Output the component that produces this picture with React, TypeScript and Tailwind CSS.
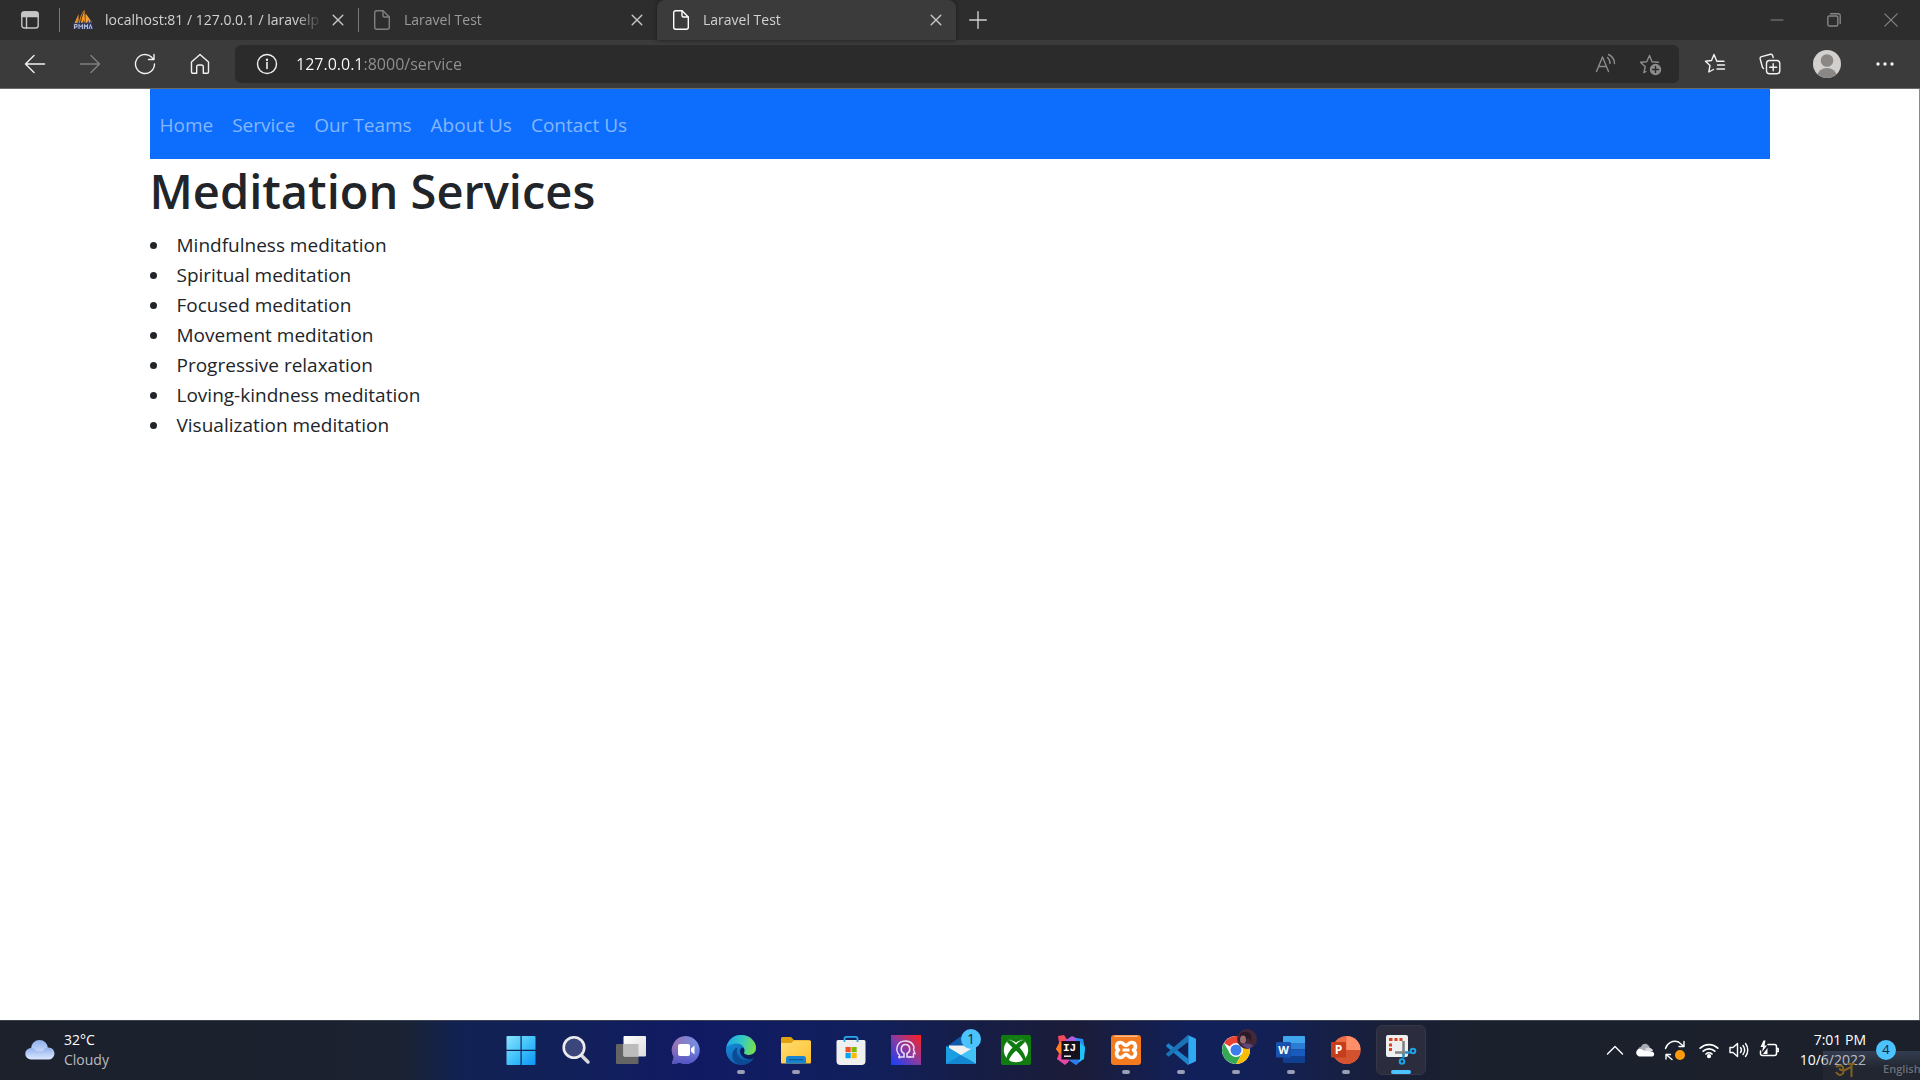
import React from "react";
import type { ReactNode } from "react";

/* ---------- browser icons ---------- */

function Line({ children, size = 20, className = "" }: { children: ReactNode; size?: number; className?: string }) {
  return (
    <svg
      width={size}
      height={size}
      viewBox={`0 0 ${size} ${size}`}
      fill="none"
      stroke="currentColor"
      strokeWidth="1.4"
      strokeLinecap="round"
      strokeLinejoin="round"
      className={"shrink-0 " + className}
      aria-hidden="true"
    >
      {children}
    </svg>
  );
}

function PageIcon() {
  return (
    <Line size={20}>
      <path d="M4.7 .7H11L17.3 7V17.3A2 2 0 0 1 15.300 19.300H4.700A2 2 0 0 1 2.700 17.300V2.700A2 2 0 0 1 4.700 .7Z" />
      <path d="M11 .9V5.500A1.500 1.500 0 0 0 12.500 7H17.100" />
    </Line>
  );
}

function CloseIcon() {
  return (
    <Line size={12}>
      <path d="M1.200 1.200 10.800 10.800M10.800 1.200 1.200 10.800" />
    </Line>
  );
}

function PmaIcon() {
  return (
    <svg width="20" height="20" viewBox="0 0 20 20" className="shrink-0" aria-hidden="true">
      <path d="M1.500 13 5.500 4 5.700 13Z" fill="#e8912b" />
      <path d="M6 13C6.500 8 8.500 3 11.500 0L12 13Z" fill="#f79a1f" />
      <path d="M12.500 13V3.500C15 6 16.500 9 19 12.500Z" fill="#f0a33a" />
      <path d="M7.500 13C8 9 9 5 10.500 2.500" stroke="#2d2d2d" fill="none" />
      <path d="M1.500 19V14.500H4V17H1.500M6 19V14.500L7.700 17 9.500 14.500V19M11.500 19V14.500L13 17 14.500 14.500V19M16 19 17.500 14.500 19 19" stroke="#34406f" strokeWidth="2.600" fill="none" />
      <path d="M1.500 19V14.500H4V17H1.500M6 19V14.500L7.700 17 9.500 14.500V19M11.500 19V14.500L13 17 14.500 14.500V19M16 19 17.500 14.500 19 19" stroke="#c3c8dc" strokeWidth=".9" fill="none" />
    </svg>
  );
}

/* ---------- browser ---------- */

type TabProps = { icon: ReactNode; title: string; active?: boolean; dim?: boolean; divider?: boolean };

function BrowserTab({ icon, title, active, dim, divider }: TabProps) {
  return (
    <div
      className={
        "flex h-10 w-[299px] items-center pl-3.5 pr-3.5 " +
        (active
          ? "rounded-t-lg bg-[#3b3b3b] text-[#d2d2d2] shadow-[0_0_4px_#1c1c1c]"
          : dim
            ? "text-[#9b9b9b]"
            : "text-[#d2d2d2]") +
        (divider ? " relative before:absolute before:left-0 before:h-6 before:w-px before:bg-[#7a7a7a]" : "")
      }
    >
      <span className={active ? "text-white" : "text-[#808080]"}>{icon}</span>
      <button
        type="button"
        role="tab"
        aria-selected={!!active}
        className="ml-3 min-w-0 flex-1 whitespace-nowrap text-left text-sm leading-6 [mask-image:linear-gradient(90deg,#000_88%,transparent)]"
      >
        {title}
      </button>
      <button type="button" aria-label={"Close " + title} className="ml-2.5 text-[#c8c8c8]">
        <CloseIcon />
      </button>
    </div>
  );
}

function BarButton({ label, dim, wide, children }: { label: string; dim?: boolean; wide?: boolean; children: ReactNode }) {
  return (
    <button
      type="button"
      aria-label={label}
      className={
        "flex h-10 shrink-0 items-center justify-center " +
        (wide ? "w-[60px] " : "w-[55px] ") +
        (dim ? "text-[#808080]" : "text-[#f2f2f2]")
      }
    >
      {children}
    </button>
  );
}

function TabStrip() {
  return (
    <div className="flex h-10 items-center bg-[#2d2d2d]">
      <button type="button" aria-label="Tab actions" className="flex w-[59px] justify-center text-[#c6c6c6]">
        <Line size={20}>
          <rect x="1.800" y="2" width="16.400" height="16" rx="2.500" />
          <path d="M2 5.500V4.500A2.500 2.500 0 0 1 4.500 2H15.500A2.500 2.500 0 0 1 18 4.500V6.500H2Z" fill="currentColor" />
          <path d="M6.500 7V18" />
        </Line>
      </button>
      <div role="tablist" className="flex">
        <BrowserTab icon={<PmaIcon />} title="localhost:81 / 127.0.0.1 / laravelp" divider />
        <BrowserTab icon={<PageIcon />} title="Laravel Test" dim divider />
        <BrowserTab icon={<PageIcon />} title="Laravel Test" active />
      </div>
      <button type="button" aria-label="New tab" className="flex w-11 justify-center text-[#d0d0d0]">
        <Line size={18}>
          <path d="M9 .7V17.300M.7 9H17.300" />
        </Line>
      </button>
      <div className="ml-auto flex pr-px text-[#858585]">
        <button type="button" aria-label="Minimize" className="flex h-10 w-[57px] items-center justify-center">
          <Line size={14}><path d="M1 7H13" strokeWidth="1.200" /></Line>
        </button>
        <button type="button" aria-label="Restore" className="flex h-10 w-[57px] items-center justify-center">
          <Line size={14}>
            <rect x=".8" y="3" width="10" height="10" rx="1.500" />
            <path d="M3.500 .8H11.500A1.800 1.800 0 0 1 13.200 2.600V10.500" />
          </Line>
        </button>
        <button type="button" aria-label="Close window" className="flex h-10 w-[57px] items-center justify-center">
          <Line size={14}><path d="M.8 .8 13.200 13.200M13.200 .8 .8 13.200" strokeWidth="1.200" /></Line>
        </button>
      </div>
    </div>
  );
}

function Toolbar() {
  return (
    <div className="flex h-[49px] items-center border-b border-[#6b6b6b] bg-[#3b3b3b] pr-2 pl-[7px]">
      <BarButton label="Back"><Line size={22}><path d="M20.500 11H1.500M10 2.500 1.500 11 10 19.500" /></Line></BarButton>
      <BarButton label="Forward" dim><Line size={22}><path d="M1.500 11H20.500M12 2.500 20.500 11 12 19.500" /></Line></BarButton>
      <BarButton label="Refresh">
        <Line size={22}><path d="M20.500 11A9.500 9.500 0 1 1 17.500 4.100L19.500 6.300M20 1.500V6.500H14.500" /></Line>
      </BarButton>
      <BarButton label="Home">
        <Line size={22}><path d="M2.500 9 11 1.500 19.500 9V19A1.300 1.300 0 0 1 18.200 20.300H14.300V14A2 2 0 0 0 12.300 12H9.700A2 2 0 0 0 7.700 14V20.300H3.800A1.300 1.300 0 0 1 2.500 19Z" /></Line>
      </BarButton>
      <div className="ml-2 flex h-[38px] min-w-0 flex-1 items-center rounded-md bg-[#2b2b2b] pl-[21px] pr-1.5">
        <button type="button" aria-label="Site information" className="text-[#f0f0f0]">
          <Line size={22}>
            <circle cx="11" cy="11" r="9.500" />
            <path d="M11 9.500V15.500" strokeWidth="1.600" />
            <circle cx="11" cy="6.800" r=".5" fill="currentColor" />
          </Line>
        </button>
        <input
          aria-label="Address"
          defaultValue="127.0.0.1:8000/service"
          className="ml-4.5 min-w-0 flex-1 bg-[linear-gradient(90deg,#ffffff_68px,#929292_68px)] bg-clip-text text-base text-transparent outline-none"
        />
        <button type="button" aria-label="Read aloud" className="flex w-[45px] justify-center text-[#8c8c8c]">
          <Line size={22}>
            <path d="M1.500 18.500 7.500 4 13.500 18.500M3.500 13.500H11.500M12.500 4.500C14.500 6 15 8 15 10.500M13.500 1.500C17.500 3.500 19.500 6.500 19.500 10.500" />
          </Line>
        </button>
        <button type="button" aria-label="Add to favorites" className="flex w-[45px] justify-center text-[#8c8c8c]">
          <Line size={23}>
            <path d="M7 18.500 4.800 19.700 6.300 13.700 1.500 9.200 7.700 8.700 10.500 2.500 13 8.700 19.500 9.200" />
            <circle cx="16.500" cy="16.500" r="5" fill="currentColor" />
            <path d="M16.500 13.500V19.500M13.500 16.500H19.500" stroke="#2b2b2b" />
          </Line>
        </button>
      </div>
      <div className="ml-2 flex">
        <BarButton label="Favorites">
          <Line size={22}>
            <path d="M20 8.200H12.800L10 1.500 7.500 7.500 1.500 8.200 6 12.500 4.800 19 9.500 16.500" />
            <path d="M13.500 12H20.500M13 16H20.500" />
          </Line>
        </BarButton>
        <BarButton label="Collections">
          <Line size={22}>
            <rect x="7.500" y="7.500" width="13.300" height="13.300" rx="3" />
            <path d="M14.200 10.700V17.700M10.700 14.200H17.700" />
            <path d="M4.500 15.500 3.500 14.500 1.200 6A2 2 0 0 1 2.600 3.600L11.500 1.300A2 2 0 0 1 13.700 2.700L14.200 4.500" />
          </Line>
        </BarButton>
        <BarButton label="Profile" wide>
          <svg width="28" height="28" viewBox="0 0 28 28" aria-hidden="true">
            <defs><clipPath id="avatar"><circle cx="14" cy="14" r="14" /></clipPath></defs>
            <g clipPath="url(#avatar)">
              <rect width="28" height="28" fill="#d2d0ce" />
              <circle cx="14" cy="10.500" r="6.300" fill="#8a8784" />
              <ellipse cx="14" cy="26" rx="9.500" ry="8" fill="#8a8784" />
            </g>
          </svg>
        </BarButton>
        <BarButton label="Settings and more">
          <svg width="18" height="4" viewBox="0 0 18 4" fill="currentColor" aria-hidden="true">
            <circle cx="2" cy="2" r="1.700" /><circle cx="9" cy="2" r="1.700" /><circle cx="16" cy="2" r="1.700" />
          </svg>
        </BarButton>
      </div>
    </div>
  );
}

/* ---------- page ---------- */

const links = ["Home", "Service", "Our Teams", "About Us", "Contact Us"];
const services = [
  "Mindfulness meditation",
  "Spiritual meditation",
  "Focused meditation",
  "Movement meditation",
  "Progressive relaxation",
  "Loving-kindness meditation",
  "Visualization meditation",
];

function Page() {
  return (
    <main className="min-h-0 flex-1 border-r border-[#8a8a8a] bg-white text-[#212529]">
      <div className="mx-auto w-full max-w-[1620px]">
        <nav aria-label="Main" className="flex items-center gap-[19px] bg-[#0d6efd] pt-[21px] pb-[19px] pl-2.5">
          {links.map((l) => (
            <a key={l} href="#" className="text-[19px] leading-[30px] text-[#86b6fe]">
              {l}
            </a>
          ))}
        </nav>
        <h1 className="mb-2 pt-px text-[47px] leading-[62px] font-semibold">Meditation Services</h1>
        <ul className="list-inside list-disc text-[19px] leading-[30px]">
          {services.map((s) => (
            <li key={s}>{s}</li>
          ))}
        </ul>
      </div>
    </main>
  );
}

/* ---------- taskbar ---------- */

function App30({ children }: { children: ReactNode }) {
  return (
    <svg width="30" height="30" viewBox="0 0 30 30" className="overflow-visible" aria-hidden="true">
      {children}
    </svg>
  );
}

type TaskItem = { name: string; running?: boolean; active?: boolean; icon: ReactNode };

const tasks: TaskItem[] = [
  {
    name: "Start",
    icon: (
      <App30>
        <defs><linearGradient id="win" x1="0" y1="0" x2="30" y2="30" gradientUnits="userSpaceOnUse"><stop stopColor="#8fe6ff" /><stop offset=".5" stopColor="#42c3fb" /><stop offset="1" stopColor="#0a93f5" /></linearGradient></defs>
        <path d="M.5 2A1 1 0 0 1 1.500 1H14.500V14.800H.5ZM15.700 1H28.500A1 1 0 0 1 29.500 2V14.800H15.700ZM.5 16H14.500V30H1.500A1 1 0 0 1 .5 29ZM15.700 16H29.500V29A1 1 0 0 1 28.500 30H15.700Z" fill="url(#win)" />
      </App30>
    ),
  },
  {
    name: "Search",
    icon: (
      <App30>
        <path d="M20.500 20.500 27 27" stroke="#d9d9de" strokeWidth="3.500" strokeLinecap="round" />
        <circle cx="13" cy="12.500" r="10.300" fill="#3b467a" stroke="#ececef" strokeWidth="2.600" />
      </App30>
    ),
  },
  {
    name: "Task view",
    icon: (
      <App30>
        <defs><linearGradient id="tv" x1="0" y1="0" x2="1" y2="1"><stop stopColor="#fff" /><stop offset="1" stopColor="#dcdcdc" /></linearGradient></defs>
        <rect x="0" y="9" width="22.500" height="20" rx="1" fill="#646464" />
        <rect x="7.500" y="1" width="22.500" height="20.500" rx="1" fill="url(#tv)" />
        <path d="M7.500 9H22.500V21.500H8.500A1 1 0 0 1 7.500 20.500Z" fill="#bcbcbc" />
      </App30>
    ),
  },
  {
    name: "Chat",
    icon: (
      <App30>
        <defs><linearGradient id="chat" x1="0" y1="0" x2="1" y2="0"><stop stopColor="#9a6fae" /><stop offset="1" stopColor="#6e92ea" /></linearGradient><linearGradient id="chat2" x1="0" y1="0" x2="0" y2="1"><stop offset=".3" stopColor="#5b5fd0" stopOpacity="0" /><stop offset="1" stopColor="#5154c4" /></linearGradient></defs>
        <path d="M15 1A14 14 0 1 1 9 27.800L2.500 29A1.200 1.200 0 0 1 1.200 27.500L2.700 22A14 14 0 0 1 15 1Z" fill="url(#chat)" />
        <path d="M15 1A14 14 0 1 1 9 27.800L2.500 29A1.200 1.200 0 0 1 1.200 27.500L2.700 22A14 14 0 0 1 15 1Z" fill="url(#chat2)" />
        <rect x="7" y="9" width="12" height="12" rx="2" fill="#fff" />
        <path d="M20 13.500 23.500 10.500V19.500L20 16.500Z" fill="#fff" />
      </App30>
    ),
  },
  {
    name: "Microsoft Edge",
    running: true,
    icon: (
      <App30>
        <defs>
          <linearGradient id="eg1" x1="0" y1=".3" x2="1" y2=".5"><stop stopColor="#1ea7e8" /><stop offset=".5" stopColor="#33c9c4" /><stop offset="1" stopColor="#7be04b" /></linearGradient>
          <linearGradient id="eg2" x1="0" y1="0" x2=".6" y2="1"><stop stopColor="#1a9de6" /><stop offset="1" stopColor="#0b56a8" /></linearGradient>
        </defs>
        <circle cx="15" cy="15" r="15" fill="url(#eg2)" />
        <path d="M.5 12C2 4.500 8 0 15 0 24 0 30 6.500 30 12.500 30 17 27 20 23 20 19.500 20 17.500 18.700 18 17.500 19.500 14.500 17.500 8.500 10.500 8.500 5.500 8.500 1.500 11 .5 12Z" fill="url(#eg1)" />
        <path d="M11.500 12.500C9 18 13 25.500 21 25.500 24.500 25.500 27 24 28.500 22.500 26 27 21 30 15.500 30 9 29 6 24 6.500 19 6.800 15.500 9 13.300 11.500 12.500Z" fill="#0c4a94" />
        <path d="M18.200 17C17.500 18.700 19.500 20 23 20 26 20 28.500 18.500 29.700 16L31 20.500 28 23C22 26.500 14.500 22 14 16.500 14 14 15.500 12.500 17 12.500 18.500 13.500 18.700 15.500 18.200 17Z" fill="#101d5c" />
      </App30>
    ),
  },
  {
    name: "File Explorer",
    running: true,
    icon: (
      <App30>
        <defs><linearGradient id="fo" x1="0" y1="0" x2="1" y2="1"><stop stopColor="#ffdd72" /><stop offset="1" stopColor="#fdc02f" /></linearGradient></defs>
        <path d="M0 3.500A1.500 1.500 0 0 1 1.500 2H10L13 5H28.500V12H0Z" fill="#e2a210" />
        <path d="M0 8H10.500L13 5.500H29A1 1 0 0 1 30 6.500V27.500A1 1 0 0 1 29 28.500H1A1 1 0 0 1 0 27.500Z" fill="url(#fo)" />
        <path d="M5 28.500V23.500A2.500 2.500 0 0 1 7.500 21H22.500A2.500 2.500 0 0 1 25 23.500V28.500Z" fill="#1783d1" />
        <path d="M8.500 24.700H21.500" stroke="#0d5a9c" strokeWidth="1.200" strokeLinecap="round" />
      </App30>
    ),
  },
  {
    name: "Microsoft Store",
    icon: (
      <App30>
        <path d="M.5 6.500A1.500 1.500 0 0 1 2 5H28A1.500 1.500 0 0 1 29.500 6.500V26A4 4 0 0 1 25.500 30H4.500A4 4 0 0 1 .5 26Z" fill="#f0f0f0" />
        <path d="M8.500 7V3.500A1.700 1.700 0 0 1 10.200 1.800H19.800A1.700 1.700 0 0 1 21.500 3.500V7" fill="none" stroke="#2aa9ea" strokeWidth="1.800" />
        <rect x="9.500" y="12" width="5.200" height="5.200" fill="#f25022" /><rect x="15.500" y="12" width="5.200" height="5.200" fill="#7fba00" />
        <rect x="9.500" y="18" width="5.200" height="5.200" fill="#00a4ef" /><rect x="15.500" y="18" width="5.200" height="5.200" fill="#ffb900" />
      </App30>
    ),
  },
  {
    name: "Assistant",
    icon: (
      <App30>
        <defs><linearGradient id="as" x1="0" y1="1" x2="1" y2="0"><stop stopColor="#1040ff" /><stop offset=".5" stopColor="#8a3aa0" /><stop offset="1" stopColor="#ff1f1f" /></linearGradient></defs>
        <rect width="30" height="30" fill="url(#as)" />
        <path d="M8.500 23.500V20C4 16 5 6 14.500 6 21 6 24 11 22.500 14.500L24 18.500H22.500V22H17.500" fill="none" stroke="#e9dcf4" strokeWidth="1.400" />
        <path d="M7 22H13V18.500C8.500 16 10 9.500 14.500 9.500 19 9.500 20.500 16 16 18.500V22H20" fill="none" stroke="#e9dcf4" strokeWidth="1.600" />
      </App30>
    ),
  },
  {
    name: "Mail, 1 new",
    icon: (
      <App30>
        <path d="M0 12 14.500 1.500 30 12V16H0Z" fill="#0c5aa8" />
        <path d="M3 10.500H27V18L15 26 3 18Z" fill="#f1f1f1" />
        <path d="M0 11 19 22.500 30 29H0Z" fill="#1b9de2" />
        <path d="M30 11 15 20 30 29Z" fill="#41c3f7" />
        <path d="M0 29 15 20 30 29Z" fill="#1487d2" />
        <circle cx="25" cy="4" r="10" fill="#4cc2ff" />
        <text x="25" y="9" textAnchor="middle" fontSize="14" fill="#10283c">1</text>
      </App30>
    ),
  },
  {
    name: "Xbox",
    icon: (
      <App30>
        <rect width="30" height="30" rx="2" fill="#107c10" />
        <circle cx="15" cy="15" r="12.200" fill="#fff" />
        <path d="M7.500 5.500C10 4.500 13 6 15 7.700 17 6 20 4.500 22.500 5.500L20 3.500 15 2.200 10 3.500Z" fill="#107c10" />
        <path d="M7 5C10.500 5 13.500 8 15 9.700 16.500 8 19.500 5 23 5L24 7 18.500 12.500C22 16.500 25 21 24.500 25L22.500 26C21 22 18 18 15 15.700 12 18 9 22 7.500 26L5.500 25C5 21 8 16.500 11.500 12.500L6 7Z" fill="#107c10" />
      </App30>
    ),
  },
  {
    name: "IntelliJ IDEA",
    icon: (
      <App30>
        <path d="M2 1 8 0 12 6V28L7 27 1 24 3 18 0 14 3 8Z" fill="#f24a5c" />
        <path d="M0 14 4 7 10 9 8 20 3 18Z" fill="#fc801d" />
        <path d="M10 5 16 1 22 4V9H9Z" fill="#b15de0" />
        <path d="M20 3 27 4 29 14 27 24 20 30 14 26Z" fill="#2a8df3" />
        <path d="M24 8 29 12 28 24 23 27Z" fill="#1fc3f5" />
        <path d="M1 24 5 20 14 25 9 30Z" fill="#e947a8" />
        <path d="M12 24H24L20 30Z" fill="#2c7cf0" />
        <rect x="5.500" y="6" width="18.500" height="18.500" fill="#160f1c" />
        <text x="7" y="16" fontSize="11" fontWeight="700" fill="#fff" fontFamily="Liberation Mono, monospace">IJ</text>
        <rect x="8" y="20.500" width="7" height="1.400" fill="#fff" />
      </App30>
    ),
  },
  {
    name: "XAMPP",
    running: true,
    icon: (
      <App30>
        <rect width="30" height="30" rx="3" fill="#f47a20" />
        <path d="M4 1.300H26" stroke="#fbb98a" strokeWidth="1.600" strokeLinecap="round" />
        <path d="M7.500 15C4.500 13 5 7.500 9.500 7.500 12.500 7.500 13 10.500 15 10.500 17 10.500 17.500 7.500 20.500 7.500 25 7.500 25.500 13 22.500 15 25.500 17 25 22.500 20.500 22.500 17.500 22.500 17 19.500 15 19.500 13 19.500 12.500 22.500 9.500 22.500 5 22.500 4.500 17 7.500 15Z" fill="none" stroke="#fff" strokeWidth="3.600" strokeLinejoin="round" />
        <path d="M11.500 15H18.500" stroke="#fff" strokeWidth="3" />
      </App30>
    ),
  },
  {
    name: "Visual Studio Code",
    running: true,
    icon: (
      <App30>
        <path d="M2.500 8.300 22 23.500V30L.6 11.700A1.200 1.200 0 0 1 .6 9.900Z" fill="#1d84c9" />
        <path d="M2.500 21.700 22 7V0L.6 18.300A1.200 1.200 0 0 0 .6 20.100Z" fill="#1a73b5" />
        <path d="M21.500 0 29 3.200A1.600 1.600 0 0 1 30 4.700V25.300A1.600 1.600 0 0 1 29 26.800L21.500 30C22 29.500 22.300 29 22.300 28V2C22.300 1 22 .5 21.500 0Z" fill="#2fa9f2" />
      </App30>
    ),
  },
  {
    name: "Google Chrome",
    running: true,
    icon: (
      <App30>
        <circle cx="15" cy="15" r="14" fill="#fff" />
        <path d="M15 15 2.900 8A14 14 0 0 1 27.100 8Z" fill="#ea4335" />
        <path d="M15 1A14 14 0 0 1 27.100 8H15Z" fill="#ea4335" />
        <path d="M2.900 8A14 14 0 0 0 15 29L21 18.500 9 18.500Z" fill="#34a853" />
        <path d="M27.100 8A14 14 0 0 1 15 29L21.200 18.500 20 8Z" fill="#fbbc04" />
        <circle cx="15" cy="15" r="7" fill="#fff" />
        <circle cx="15" cy="15" r="5.500" fill="#3b7ded" />
        <circle cx="26" cy="4" r="10" fill="#43283a" />
        <path d="M19 -1C22 -4 28 -4 30 0L31 7 27 3 23 7 18 6Z" fill="#2a1a29" />
        <ellipse cx="22" cy="4.500" rx="3" ry="4" fill="#9a6d70" />
        <path d="M21 10C25 7 30 9 32 11L27 14Z" fill="#5e4a7e" />
      </App30>
    ),
  },
  {
    name: "Word",
    running: true,
    icon: (
      <App30>
        <path d="M7 2A1 1 0 0 1 8 1H28A1 1 0 0 1 29 2V8H7Z" fill="#41a5ee" />
        <path d="M7 8H29V14.500H7Z" fill="#2b7cd3" /><path d="M7 14.500H29V21H7Z" fill="#185abd" />
        <path d="M7 21H29V27A1 1 0 0 1 28 28H8A1 1 0 0 1 7 27Z" fill="#103f91" />
        <rect x="0" y="7" width="15" height="15.500" rx="1.200" fill="#1852ae" />
        <text x="7.500" y="18.800" textAnchor="middle" fontSize="11" fontWeight="700" fill="#fff">W</text>
      </App30>
    ),
  },
  {
    name: "PowerPoint",
    running: true,
    icon: (
      <App30>
        <circle cx="15.500" cy="15" r="14" fill="#ed6c47" />
        <path d="M15.500 1A14 14 0 0 1 29.500 15H15.500Z" fill="#ff8f6b" />
        <path d="M1.500 15H29.500A14 14 0 0 1 1.500 15Z" fill="#d35230" />
        <rect x="0" y="7" width="15" height="15.500" rx="1.200" fill="#c43e1c" />
        <text x="7.500" y="18.800" textAnchor="middle" fontSize="12" fontWeight="700" fill="#fff">P</text>
      </App30>
    ),
  },
  {
    name: "Snipping Tool",
    running: true,
    active: true,
    icon: (
      <App30>
        <rect x="0" y="0" width="22" height="22" rx="2" fill="#efefef" />
        <path d="M3 3H6.500V6H3ZM8.500 3H11.500V6H8.500ZM13.500 3H16.500V6H13.500ZM3 8.500H6V11.500H3ZM3 13H6V16H3Z" fill="#d8431b" />
        <path d="M17.500 6V20M9 17.500H20" stroke="#7e8488" strokeWidth="2.600" />
        <path d="M17.500 19V23M20 17.500H24" stroke="#1b8fd0" strokeWidth="2.400" />
        <circle cx="16" cy="26.500" r="2.300" fill="none" stroke="#1da3e6" strokeWidth="2" />
        <circle cx="27" cy="16" r="2.300" fill="none" stroke="#1da3e6" strokeWidth="2" />
      </App30>
    ),
  },
];

function TaskButton({ t }: { t: TaskItem }) {
  return (
    <button type="button" aria-label={t.name} className="flex w-[55px] justify-center">
      <span
        className={
          "relative flex size-[50px] items-center justify-center rounded-md border " +
          (t.active ? "border-[#353748] bg-[#2b2d3e]" : "border-transparent")
        }
      >
        {t.icon}
        {t.running && (
          <span className={"absolute bottom-0 h-1 rounded-full " + (t.active ? "w-5 bg-[#4cc2ff]" : "w-2 bg-[#9a9eb5]")} />
        )}
      </span>
    </button>
  );
}

function Tray() {
  return (
    <div className="flex flex-1 items-center justify-end pr-6 text-white">
      <button type="button" aria-label="Show hidden icons" className="flex w-[30px] justify-center">
        <Line size={18}><path d="M1.500 13 9 5.500 16.500 13" /></Line>
      </button>
      <button type="button" aria-label="OneDrive" className="flex w-[30px] justify-center">
        <svg width="20" height="14" viewBox="0 0 20 14" aria-hidden="true">
          <path d="M4 10C2 8 3 4 6 4 7 1 11-.5 13.500 2.500 14.500 3.500 15 5 15 6L8 12Z" fill="#a9adb3" />
          <path d="M10 6C13 3.500 18 5 18 8L12 10Z" fill="#d8dade" />
          <path d="M4 13.500A4 4 0 0 1 3 6.300C5 5.500 7 6.200 8 7.200L18 9A2.500 2.500 0 0 1 17.500 13.500Z" fill="#fff" />
        </svg>
      </button>
      <button type="button" aria-label="Updates available" className="mr-1 flex w-[30px] justify-center">
        <Line size={22}>
          <path d="M1.500 9.500C3 4 9 .8 14.500 3L20 7.500M20 2.500V7.500H15M8 20.500 2 15.500M2 20V15.500H6.500" />
          <circle cx="16" cy="16" r="5" fill="#ff9a0d" stroke="none" />
        </Line>
      </button>
      <button type="button" aria-label="Network, volume and battery" className="flex w-[90px] items-center justify-around">
        <Line size={20}>
          <path d="M1.200 8.200A12.500 12.500 0 0 1 18.800 8.200M4.200 11.200A8.200 8.200 0 0 1 15.800 11.200M7 14A4.300 4.300 0 0 1 13 14" strokeWidth="1.700" />
          <circle cx="10" cy="16.200" r="1.400" fill="currentColor" />
        </Line>
        <Line size={20}>
          <path d="M1 7.500H4L8.500 3.500V16.500L4 12.500H1ZM11.500 7.500A4 4 0 0 1 11.500 12.500M14 5.500A7.500 7.500 0 0 1 14 14.500M16.500 3.500A10.500 10.500 0 0 1 16.500 16.500" />
        </Line>
        <Line size={20}>
          <path d="M9 4.500H15.500A2 2 0 0 1 17.500 6.500V13.500A2 2 0 0 1 15.500 15.500H3.500A2 2 0 0 1 1.500 13.500V11M18 8.500H19.200V11.500H18" strokeWidth="1.500" />
          <path d="M4.500 .5 1.500 7H4L3 12 8 5.500H5.500L6.500 .5Z" fill="currentColor" stroke="none" />
          <path d="M4 14 8.500 8V14Z" fill="currentColor" stroke="none" />
        </Line>
      </button>
      <button type="button" className="ml-2 flex w-[74px] flex-col items-end whitespace-nowrap text-sm leading-5">
        <span>7:01 PM</span>
        <span>10/6/2022</span>
      </button>
      <button type="button" aria-label="4 notifications" className="relative z-10 ml-2.5 flex size-5 items-center justify-center rounded-full bg-[#4cc2ff] text-[13px] text-[#13293a]">
        4
      </button>
    </div>
  );
}

function LanguageBar() {
  return (
    <div className="absolute right-0 bottom-0 flex h-[29px] w-[97px] items-center bg-linear-to-b from-[#5a6a8a]/40 to-[#2b2f38]/40 to-60%">
      <svg width="20" height="14" viewBox="0 0 20 14" className="ml-3 mt-2 shrink-0" fill="none" stroke="#80611f" strokeWidth="2" aria-hidden="true">
        <path d="M12 1H20M16.500 1V14M1 4C5 1 9 3 8 6 7 8 4 7 5 5M8 6C10 12 4 14 1 9M8 8 16 4" />
      </svg>
      <span className="ml-7 mt-2 whitespace-nowrap text-[11px] font-semibold text-[#6c7079]">English</span>
    </div>
  );
}

function Taskbar() {
  return (
    <footer className="relative flex h-[60px] shrink-0 items-center bg-[linear-gradient(90deg,#1c212c_0%,#1b212e_17%,#1b2334_21%,#112253_24%,#12205a_30%,#101a63_36%,#111f5c_45%,#161d45_51%,#1b1c38_56%,#11205a_62%,#122056_66%,#191f38_72%,#1b212c_77%,#1b202b_100%)] shadow-[inset_0_1px_0_#3b4450]">
      <div className="flex flex-1 items-center pl-6">
        <button type="button" className="flex items-center text-left">
          <svg width="32" height="22" viewBox="0 0 32 22" aria-hidden="true">
            <defs><linearGradient id="cloud" x1="0" y1="0" x2="0" y2="1"><stop stopColor="#8fb0ec" /><stop offset="1" stopColor="#dce9ff" /></linearGradient></defs>
            <circle cx="15.500" cy="9.500" r="8.500" fill="url(#cloud)" />
            <path d="M7 9A6 6 0 0 1 12.500 12L19 12A6 6 0 1 1 25 20.500H7A5.700 5.700 0 0 1 7 9Z" fill="url(#cloud)" />
          </svg>
          <span className="ml-2 flex flex-col text-sm leading-5">
            <span className="text-white">32°C</span>
            <span className="text-[#b9bcc2]">Cloudy</span>
          </span>
        </button>
      </div>
      <div className="flex shrink-0 pl-0.5">
        {tasks.map((t) => (
          <TaskButton key={t.name} t={t} />
        ))}
      </div>
      <Tray />
      <LanguageBar />
    </footer>
  );
}

export default function App() {
  return (
    <div className="flex h-screen flex-col font-['Open_Sans','Noto_Sans',sans-serif]">
      <header className="shrink-0">
        <TabStrip />
        <Toolbar />
      </header>
      <Page />
      <Taskbar />
    </div>
  );
}
